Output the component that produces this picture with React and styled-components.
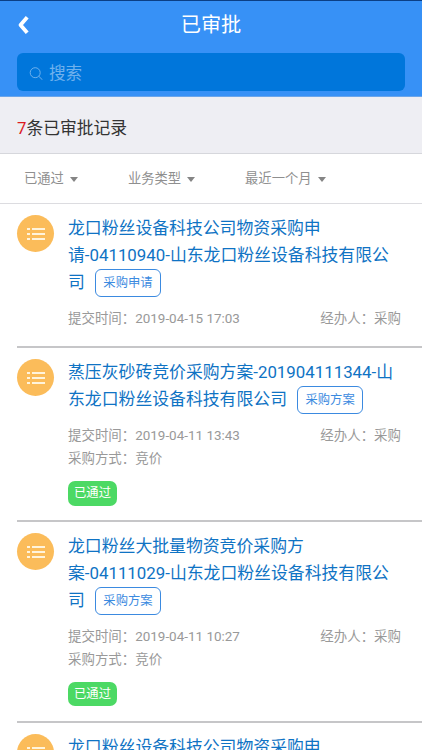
import React, {useState} from "react";
import styled, {createGlobalStyle} from "styled-components";

const GlobalStyle = createGlobalStyle`
* {
    box-sizing: border-box;
}
body {
    margin: 0;
    overflow: hidden;
    background: #fff;
    font-family: Roboto, "Noto Sans CJK SC", sans-serif;
}
`;

const Page = styled.div`
display: flex;
flex-direction: column;
width: 422px;
height: 750px;
overflow: hidden;
background: #fff;
`;

const Header = styled.header`
flex: none;
height: 97px;
padding: 0 17px;
border-top: 1px solid #0b3f85;
border-bottom: 1px solid #6ba5ea;
background: #3791f6;
`;

const TitleBar = styled.div`
display: grid;
grid-template-columns: 16px 1fr 16px;
align-items: center;
height: 47px;
margin-bottom: 5px;
`;

const BackButton = styled.button`
display: flex;
padding: 0;
border: 0;
background: none;
`;

const PageTitle = styled.h1`
margin: 0;
color: #fff;
font-size: 20.2px;
font-weight: 400;
line-height: 30px;
text-align: center;
`;

const SearchBox = styled.label`
display: flex;
align-items: center;
gap: 6px;
height: 38px;
padding: 2px 12px 0;
border-radius: 6px;
background: #0076db;
`;

const SearchInput = styled.input`
flex: 1;
min-width: 0;
height: 30px;
padding: 0;
border: 0;
outline: 0;
background: none;
color: #fff;
font-family: inherit;
font-size: 16.6px;

&::placeholder {
    color: #6fb1ed;
}
`;

const Summary = styled.div`
flex: none;
height: 57px;
padding: 0 17px;
border-bottom: 1px solid #d6d7dc;
background: #eeeef3;
color: #333;
font-size: 16.8px;
line-height: 63px;
`;

const Count = styled.span`
color: #dc1a1f;
`;

const Filters = styled.div`
display: flex;
flex: none;
align-items: center;
gap: 50px;
height: 50px;
padding: 0 24px;
border-bottom: 1px solid #dcdce0;
`;

const Filter = styled.button`
display: flex;
align-items: center;
gap: 6px;
padding: 0;
border: 0;
background: none;
color: #8f8f8f;
font-family: inherit;
font-size: 13.3px;
line-height: 20px;
`;

const Caret = styled.span`
margin-top: 2px;
border-top: 5px solid #858585;
border-left: 4px solid transparent;
border-right: 4px solid transparent;
`;

const List = styled.main`
padding: 0 0 0 17px;
`;

const Item = styled.article`
display: flex;
gap: 15px;
height: ${props => props.$height}px;
padding-top: 11px;
border-bottom: 2px solid #c6c6c8;
`;

const Avatar = styled.div`
display: flex;
flex: none;
align-items: center;
justify-content: center;
width: 37px;
height: 37px;
padding-top: 1px;
border-radius: 50%;
background: #fbbc5a;
`;

const Body = styled.div`
flex: 1;
margin-left: -1px;
padding-right: 21px;
`;

const Title = styled.div`
color: #0f73c4;
font-size: 16.85px;
line-height: 27px;
white-space: pre;
`;

const Tag = styled.span`
display: inline-block;
height: 28px;
margin: 0 0 -8px 10px;
padding: 0 7.5px;
border: 1px solid #3b8ae0;
border-radius: 6px;
color: #3b8ae0;
font-size: 12.3px;
line-height: 26px;
vertical-align: 1px;
`;

const Meta = styled.div`
display: flex;
justify-content: space-between;
color: #999;
font-size: 13.45px;
line-height: 22.5px;
`;

const MetaBlock = styled.div`
margin-top: ${props => props.$gap}px;
`;

const Status = styled.div`
width: 49px;
height: ${props => props.$height}px;
margin-top: 11px;
border-radius: 7px;
background: #4cd964;
color: #fff;
font-size: 12.3px;
line-height: 24px;
text-align: center;
`;

const records = [
    {
        title: "龙口粉丝设备科技公司物资采购申\n请-04110940-山东龙口粉丝设备科技有限公\n司",
        tag: "采购申请",
        time: "2019-04-15 17:03",
        height: 144,
        gap: 12
    },
    {
        title: "蒸压灰砂砖竞价采购方案-201904111344-山\n东龙口粉丝设备科技有限公司",
        tag: "采购方案",
        time: "2019-04-11 13:43",
        method: "竞价",
        height: 174,
        statusHeight: 25,
        gap: 12
    },
    {
        title: "龙口粉丝大批量物资竞价采购方\n案-04111029-山东龙口粉丝设备科技有限公\n司",
        tag: "采购方案",
        time: "2019-04-11 10:27",
        method: "竞价",
        height: 201,
        statusHeight: 24,
        gap: 12
    },
    {
        title: "龙口粉丝设备科技公司物资采购申\n请-04110940-山东龙口粉丝设备科技有限公\n司",
        tag: "采购申请",
        time: "2019-04-11 10:12",
        height: 144,
        gap: 12
    }
];

const BackIcon = () => (
    <svg width="14" height="22" viewBox="0 0 14 22">
        <path d="M10.2 3.2L3.5 11L10.2 18.8" fill="none" stroke="#fff" strokeWidth="3.8" strokeLinejoin="round"/>
    </svg>
);

const SearchIcon = () => (
    <svg width="14" height="14" viewBox="0 0 14 14" fill="none" stroke="#6fb1ed" strokeWidth="1">
        <circle cx="6.2" cy="6.7" r="5"/>
        <path d="M9.8 10.3L13.5 13.9"/>
    </svg>
);

const ListIcon = () => (
    <svg width="18" height="12" viewBox="0 0 18 12" fill="#fff4dc">
        <path d="M0 0h3v2H0zM5 0h13v2H5zM0 5h3v2H0zM5 5h13v2H5zM0 10h3v2H0zM5 10h13v2H5z"/>
    </svg>
);

const Record = ({record}) => {
    return <Item $height={record.height}>
        <Avatar><ListIcon/></Avatar>
        <Body>
            <Title>
                {record.title}
                <Tag>{record.tag}</Tag>
            </Title>
            <MetaBlock $gap={record.gap}>
                <Meta>
                    <span>提交时间：{record.time}</span>
                    <span>经办人：采购</span>
                </Meta>
                {record.method && <Meta>采购方式：{record.method}</Meta>}
            </MetaBlock>
            {record.method && <Status $height={record.statusHeight}>已通过</Status>}
        </Body>
    </Item>
};

export default function App() {
    const [keyword, setKeyword] = useState("");

    return <Page>
        <GlobalStyle/>
        <Header>
            <TitleBar>
                <BackButton><BackIcon/></BackButton>
                <PageTitle>已审批</PageTitle>
            </TitleBar>
            <SearchBox>
                <SearchIcon/>
                <SearchInput value={keyword} placeholder="搜索" onChange={(e) => setKeyword(e.target.value)}/>
            </SearchBox>
        </Header>
        <Summary><Count>7</Count>条已审批记录</Summary>
        <Filters>
            <Filter>已通过<Caret/></Filter>
            <Filter>业务类型<Caret/></Filter>
            <Filter>最近一个月<Caret/></Filter>
        </Filters>
        <List>
            {records.map((record, i) => <Record key={i} record={record}/>)}
        </List>
    </Page>;
}
